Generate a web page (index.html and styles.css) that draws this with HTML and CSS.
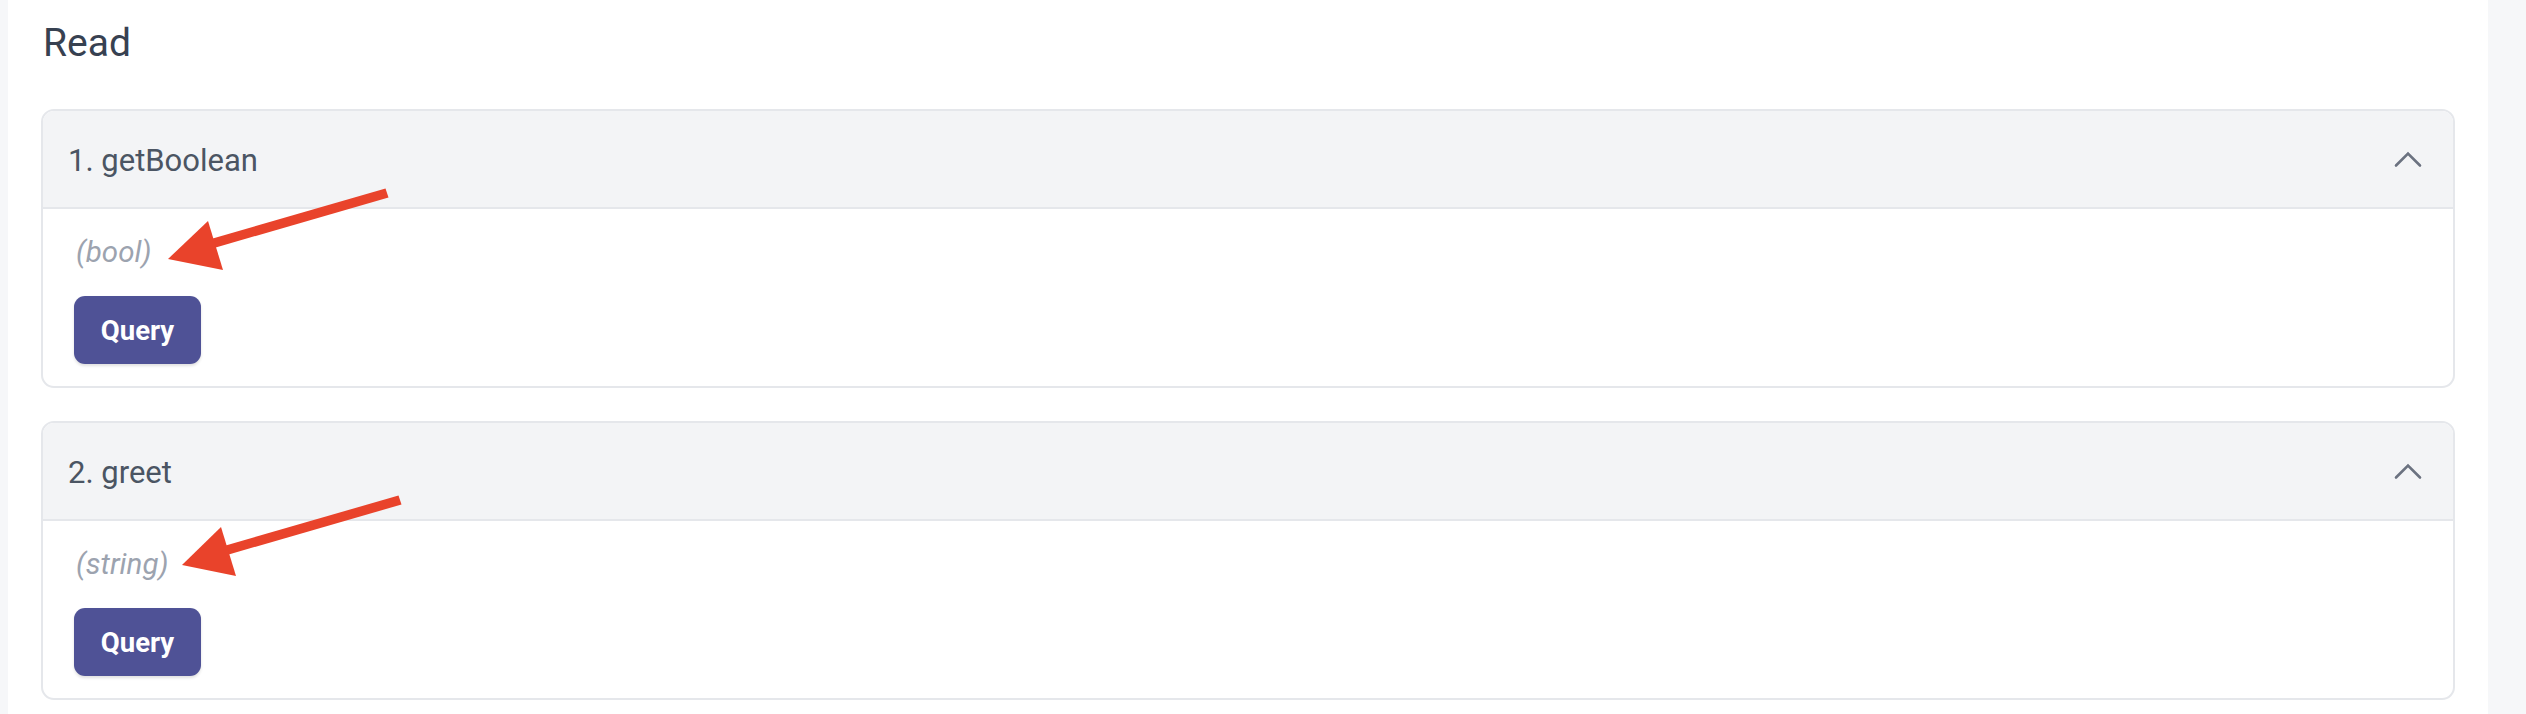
FILE: index.html
```html
<!DOCTYPE html>
<html lang="en">
<head>
<meta charset="utf-8">
<title>Read</title>
<link rel="stylesheet" href="styles.css">
</head>
<body>
<div class="page">
  <main class="panel">
    <h2 class="section-title">Read</h2>
    <div class="cards">
      <section class="card">
        <header class="card-head">
          <span class="fn-name">1. getBoolean</span>
          <svg class="chevron" width="30" height="18" viewBox="0 0 30 18"><polyline points="3,15.5 15,3.5 27,15.5" fill="none" stroke="#6b7280" stroke-width="2.6" stroke-linecap="round" stroke-linejoin="miter"/></svg>
        </header>
        <div class="card-body">
          <div class="ret-type">(bool)</div>
          <button class="query-btn">Query</button>
        </div>
      </section>
      <section class="card">
        <header class="card-head">
          <span class="fn-name">2. greet</span>
          <svg class="chevron" width="30" height="18" viewBox="0 0 30 18"><polyline points="3,15.5 15,3.5 27,15.5" fill="none" stroke="#6b7280" stroke-width="2.6" stroke-linecap="round" stroke-linejoin="miter"/></svg>
        </header>
        <div class="card-body">
          <div class="ret-type">(string)</div>
          <button class="query-btn">Query</button>
        </div>
      </section>
    </div>
  </main>
  <div class="gutter"></div>
</div>
<svg class="annotations" width="2526" height="714" viewBox="0 0 2526 714">
  <g fill="#e9432b" stroke="none">
    <polygon points="385.5,188.5 388.5,197.5 214,248 211,239"/>
    <polygon points="168,259 208,221 223,270"/>
    <polygon points="398.5,495.5 401.5,504.5 227,555 224,546"/>
    <polygon points="182,565 221,527 236,576"/>
  </g>
</svg>
</body>
</html>
```
FILE: styles.css
```css
* { box-sizing: border-box; }
html, body { margin: 0; padding: 0; }
body {
  background: #f6f7f9;
  font-family: Roboto, "Liberation Sans", Arial, sans-serif;
  width: 2526px;
  height: 714px;
  overflow: hidden;
  position: relative;
}
.page {
  display: flex;
  height: 714px;
  padding-left: 8px;
}
.panel {
  flex: 1;
  background: #ffffff;
  padding: 17px 33px 0 33px;
}
.gutter { width: 38px; flex: none; }
.section-title {
  margin: 0 0 40px 2px;
  font-size: 39px;
  line-height: 52px;
  font-weight: 400;
  color: #374151;
}
.cards {
  display: flex;
  flex-direction: column;
  gap: 33px;
}
.card {
  border: 2px solid #e5e7eb;
  border-radius: 13px;
  overflow: hidden;
  background: #fff;
}
.card-head {
  display: flex;
  align-items: center;
  justify-content: space-between;
  height: 98px;
  padding: 0 30px 0 25px;
  background: #f3f4f6;
  border-bottom: 2px solid #e5e7eb;
}
.fn-name {
  font-size: 31px;
  color: #4b5563;
  line-height: 1;
  padding-top: 2px;
}
.chevron { display: block; margin-top: -1px; }
.card-body {
  padding: 22px 31px 22px 31px;
  display: flex;
  flex-direction: column;
  align-items: flex-start;
  gap: 22px;
}
.ret-type {
  font-style: italic;
  font-size: 29.5px;
  line-height: 43px;
  color: #9ca3af;
  padding-left: 2px;
}
.query-btn {
  font-family: Roboto, "Liberation Sans", Arial, sans-serif;
  font-weight: 700;
  font-size: 27.5px;
  color: #ffffff;
  background: #4f5296;
  border: none;
  border-radius: 11px;
  width: 127px;
  height: 68px;
  padding: 0;
  box-shadow: 0 2px 3px rgba(0,0,0,0.12);
}
.annotations {
  position: absolute;
  left: 0;
  top: 0;
  pointer-events: none;
}
```
